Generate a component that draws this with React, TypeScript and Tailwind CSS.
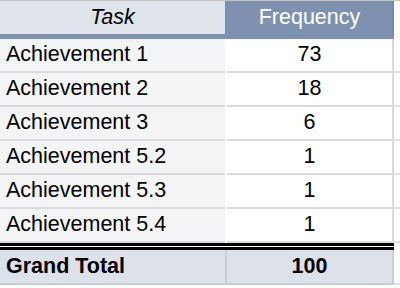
import React from 'react';

const rows = [
  { task: 'Achievement 1', freq: 73 },
  { task: 'Achievement 2', freq: 18 },
  { task: 'Achievement 3', freq: 6 },
  { task: 'Achievement 5.2', freq: 1 },
  { task: 'Achievement 5.3', freq: 1 },
  { task: 'Achievement 5.4', freq: 1 },
];

const App: React.FC = () => {
  return (
    <div className="w-[400px] h-[288px] bg-white overflow-hidden text-[21.5px] text-black leading-none" style={{ fontFamily: '"Liberation Sans", Arial, sans-serif' }}>
      {/* Header */}
      <div className="flex h-[34px] border-t border-[#c4c4c4]">
        <div className="w-[225px] bg-[#dfe3ea] flex items-center justify-center italic">Task</div>
        <div className="w-[2px] bg-[#7d8fae]" />
        <div className="w-[165px] bg-[#7f91b1] flex items-center justify-center text-white">Frequency</div>
        <div className="w-[2px] bg-[#7489aa]" />
        <div className="flex-1 bg-white" />
      </div>
      <div className="flex h-[5px]">
        <div className="w-[394px] bg-[#7e90b0]" />
        <div className="flex-1 bg-white" />
      </div>

      {/* Body */}
      {rows.map((r) => (
        <div key={r.task} className="flex h-[34px]">
          <div className="w-[225px] bg-[#f3f4f6] border-b-2 border-[#d9dadd] flex items-center pl-[6px]">{r.task}</div>
          <div className="w-[2px] bg-white" />
          <div className="w-[165px] bg-white border-b-2 border-[#d9dadd] flex items-center justify-center">{r.freq}</div>
          <div className="w-[2px] bg-[#d9dadd]" />
          <div className="flex-1 bg-white border-b-2 border-[#e3e3e3]" />
        </div>
      ))}

      {/* Double rule */}
      <div className="flex">
        <div className="w-[394px] h-[7px] border-y-[3px] border-black bg-white" />
        <div className="flex-1 bg-white" />
      </div>

      {/* Grand total */}
      <div className="flex h-[35px] font-bold">
        <div className="w-[225px] bg-[#dde1e9] border-b-2 border-[#c9ccd2] flex items-center pl-[6px]">Grand Total</div>
        <div className="w-[2px] bg-[#c9ccd2]" />
        <div className="w-[165px] bg-[#dde1e9] border-b-2 border-[#c9ccd2] flex items-center justify-center">100</div>
        <div className="w-[2px] bg-[#c9ccd2]" />
        <div className="flex-1 bg-white border-b-2 border-[#e3e3e3]" />
      </div>
    </div>
  );
};

export default App;
